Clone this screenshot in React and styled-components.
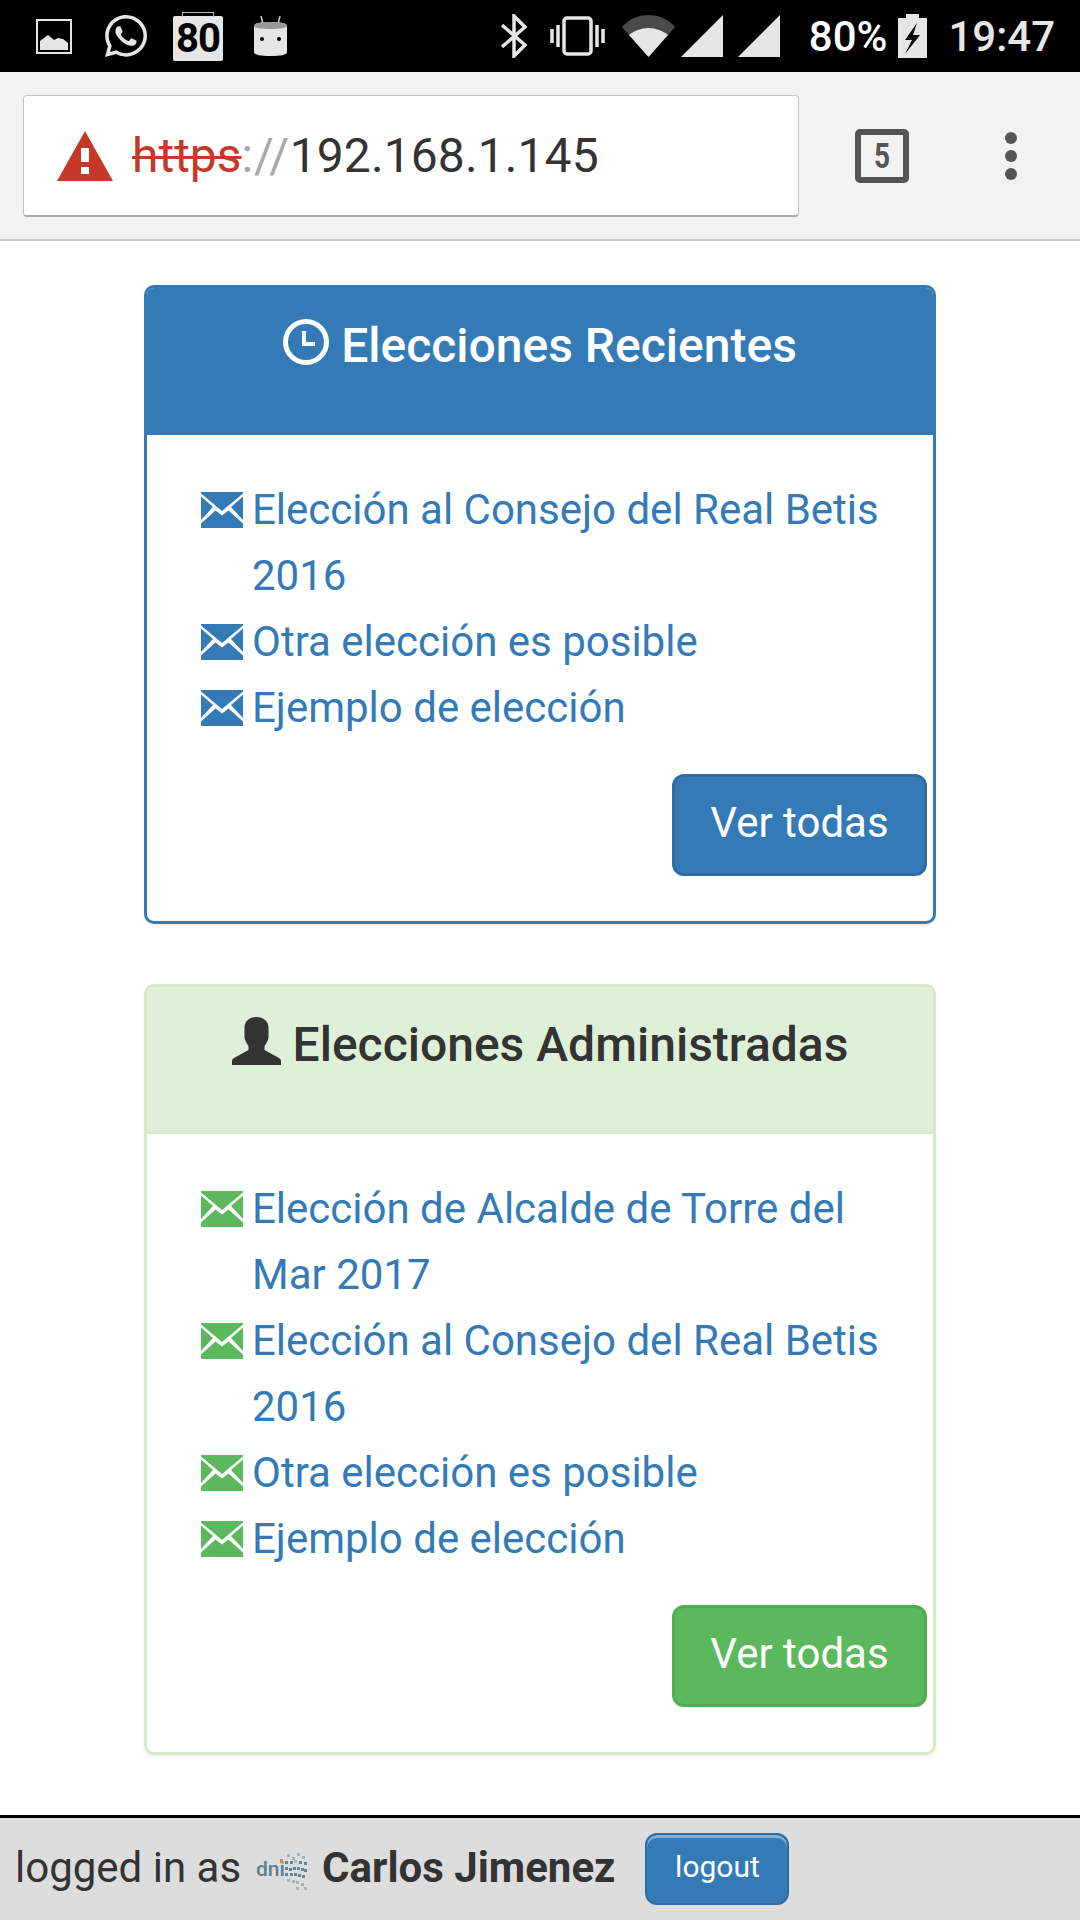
import React from 'react'
import styled, { createGlobalStyle } from 'styled-components'
import { FaWhatsapp } from 'react-icons/fa'

const GlobalStyle = createGlobalStyle`
  html, body { margin: 0; padding: 0; background: #fff; }
  * { box-sizing: border-box; }
  body { font-family: Roboto, "Liberation Sans", sans-serif; color: #333; }
`

const Screen = styled.div`
  width: 1080px;
  height: 1920px;
  display: flex;
  flex-direction: column;
  overflow: hidden;
`

const StatusBar = styled.div`
  height: 72px;
  background: #000;
  display: flex;
  align-items: center;
  padding: 0 25px 0 36px;
  color: #e6e6e6;
  flex-shrink: 0;
`
const StatusIcon = styled.svg`
  display: block;
  flex-shrink: 0;
  margin-left: ${p => p.$ml || 0}px;
`
const Spacer = styled.div`
  flex: 1;
`
const WhatsApp = styled(FaWhatsapp)`
  display: block;
  margin-left: 30px;
  color: #e6e6e6;
`
const CountBadge = styled.div`
  position: relative;
  width: 50px;
  height: 45px;
  margin: 4px 0 0 23px;
  background: #e6e6e6;
  border-radius: 2px;
  color: #000;
  font-size: 40px;
  font-weight: 700;
  line-height: 46px;
  text-align: center;
  letter-spacing: -1px;

  &::before {
    content: '';
    position: absolute;
    top: -4px;
    left: 9px;
    right: 9px;
    height: 4px;
    border: 1px solid #bbb;
    border-bottom: none;
  }
`
const BatteryLevel = styled.span`
  font-size: 42px;
  font-weight: 500;
  color: #fff;
  margin-left: 29px;
`
const Clock = styled.span`
  font-size: 42px;
  font-weight: 500;
  color: #e6e6e6;
  margin-left: 21px;
`

const Toolbar = styled.div`
  height: 169px;
  background: #f2f2f2;
  border-bottom: 2px solid #c8c8c8;
  display: flex;
  align-items: center;
  padding: 1px 0 0 23px;
  flex-shrink: 0;
`
const UrlBox = styled.div`
  width: 776px;
  height: 122px;
  background: #fff;
  border: 1px solid #c4c4c4;
  border-bottom: 2px solid #aaa;
  border-radius: 4px;
  display: flex;
  align-items: center;
  padding-left: 33px;
  font-size: 48px;
  color: #333;
`
const Scheme = styled.span`
  color: #c53929;
  text-decoration: line-through;
  text-decoration-thickness: 3px;
  margin-left: 19px;
`
const Slashes = styled.span`
  color: #a8a8a8;
  letter-spacing: 0.7px;
`
const Host = styled.span`
  letter-spacing: 0.1px;
`
const TabCount = styled.div`
  width: 54px;
  height: 54px;
  margin-left: 56px;
  border: 6px solid #555;
  border-radius: 5px;
  display: flex;
  align-items: center;
  justify-content: center;
  font-size: 35px;
  font-weight: 700;
  color: #555;
`
const TabDigit = styled.span`
  display: block;
  transform: scaleX(0.8);
`
const MenuDots = styled.div`
  margin-left: 96px;
  display: flex;
  flex-direction: column;
  gap: 6px;
`
const Dot = styled.span`
  width: 12px;
  height: 12px;
  border-radius: 50%;
  background: #555;
`

const Main = styled.div`
  flex: 1;
  padding: 44px 144px 0;
  display: flex;
  flex-direction: column;
  gap: 60px;
`
const Card = styled.section`
  border: 3px solid ${p => p.$border};
  border-radius: 10px;
  background: #fff;
  box-shadow: 0 2px 4px rgba(0, 0, 0, 0.05);
  overflow: hidden;
`
const CardHeader = styled.header`
  height: 147px;
  background: ${p => p.$bg};
  color: ${p => p.$color};
  border-bottom: ${p => p.$rule ? `3px solid ${p.$rule}` : 'none'};
  padding-top: 29px;
  display: flex;
  justify-content: center;
  align-items: flex-start;
  gap: 12px;
`
const CardTitle = styled.h2`
  margin: 0;
  font-size: 48px;
  line-height: 58px;
  font-weight: 500;
`
const HeaderIcon = styled.svg`
  display: block;
  margin-top: ${p => p.$top}px;
  flex-shrink: 0;
`
const CardBody = styled.div`
  padding: 42px 6px 45px 54px;
`
const List = styled.ul`
  list-style: none;
  margin: 0;
  padding: 0;
`
const Row = styled.li`
  display: flex;
  gap: 9px;
  font-size: 42px;
  line-height: 66px;
`
const Envelope = styled.svg`
  display: block;
  width: 42px;
  height: 36px;
  margin-top: 15px;
  flex-shrink: 0;
  color: ${p => p.$color};
`
const ElectionLink = styled.a`
  color: #337ab7;
  text-decoration: none;
  width: 660px;
`
const ButtonRow = styled.div`
  display: flex;
  justify-content: flex-end;
  margin-top: 33px;
`
const SeeAll = styled.button`
  width: 255px;
  height: 102px;
  background: ${p => p.$bg};
  border: 3px solid ${p => p.$border};
  border-radius: 12px;
  color: #fff;
  font-family: inherit;
  font-size: 42px;
  padding: 0 0 6px;
`

const Footer = styled.footer`
  height: 105px;
  background: #ddd;
  border-top: 3px solid #000;
  display: flex;
  align-items: center;
  padding-left: 15px;
  flex-shrink: 0;
`
const LoggedIn = styled.span`
  font-size: 42px;
  color: #333;
  margin-top: -4px;
`
const DniLogo = styled.svg`
  display: block;
  margin-left: 15px;
`
const UserName = styled.strong`
  font-size: 42px;
  font-weight: 700;
  color: #333;
  margin-left: 15px;
  margin-top: -4px;
`
const Logout = styled.button`
  width: 144px;
  height: 72px;
  margin-left: 30px;
  margin-top: -1px;
  background: #337ab7;
  border: 2px solid #2e6da4;
  border-radius: 12px;
  box-shadow: inset 0 3px 0 rgba(255, 255, 255, 0.4);
  color: #fff;
  font-family: inherit;
  font-size: 30px;
  padding: 0 0 4px;
`

const MailIcon = ({ color }) => (
  <Envelope $color={color} viewBox="0 0 42 36" fill="currentColor">
    <path d="M0 0h42v1.500L21 19 0 1.500z" />
    <path d="M0 4.500L12 15 0 28z" />
    <path d="M42 4.500L30 15 42 28z" />
    <path d="M0 36v-4.500L14.500 18.500l6.500 5 6.500-5L42 31.500V36z" />
  </Envelope>
)

const ClockIcon = () => (
  <HeaderIcon $top={2} width="46" height="46" viewBox="0 0 46 46" fill="none" stroke="#fff">
    <circle cx="23" cy="23" r="20.500" strokeWidth="5" />
    <path d="M21 12v13h11" strokeWidth="4" />
  </HeaderIcon>
)

const UserIcon = () => (
  <HeaderIcon $top={1} width="49" height="48" viewBox="0 0 49 48" fill="#333">
    <path d="M24.500 0c-7 0-12 4-12 11v9c0 3 2 6 4 9v4L2 41c-1.500 1-2 2-2 3v4h49v-4c0-1-.5-2-2-3l-14.500-8v-4c2-3 4-6 4-9v-9c0-7-5-11-12-11z" />
  </HeaderIcon>
)

const DOTS = [
  [31, 6], [36, 9], [41, 5], [46, 8], [29, 13], [34, 13], [38, 12], [43, 13], [48, 14],
  [29, 19], [33, 20], [37, 19], [41, 19], [45, 20], [48, 21], [29, 25], [34, 25], [38, 25],
  [42, 26], [46, 27], [31, 31], [36, 32], [40, 33], [45, 35], [48, 39], [40, 39],
]

const StatusRow = () => (
  <StatusBar>
    <StatusIcon width="36" height="35" viewBox="0 0 36 35">
      <path d="M1 1h34v33H1z" fill="none" stroke="#e6e6e6" strokeWidth="2" />
      <path d="M4 31v-9l8-6 6 5 4-2 5 1 5 4v7z" fill="#e6e6e6" />
    </StatusIcon>
    <WhatsApp size={48} />
    <CountBadge>80</CountBadge>
    <StatusIcon $ml={31} width="33" height="40" viewBox="0 0 33 40">
      <path d="M7 0l2 8M26 0l-2 8" stroke="#ccc" strokeWidth="1.500" />
      <path d="M0 10c0-3 7-4 16.500-4S33 7 33 10v26c0 3-7 4-16.500 4S0 39 0 36z" fill="#e6e6e6" />
      <path d="M0 10c0-3 7-4 16.500-4S33 7 33 10c0 2-7 3-16.500 3S0 12 0 10z" fill="#999" />
      <circle cx="8" cy="23" r="2" fill="#000" />
      <circle cx="25" cy="23" r="2" fill="#000" />
    </StatusIcon>
    <Spacer />
    <StatusIcon width="26" height="44" viewBox="0 0 26 44">
      <path d="M1 11l23 20-11 11V2l11 11L1 33" fill="none" stroke="#e6e6e6" strokeWidth="3.500" />
    </StatusIcon>
    <StatusIcon $ml={23} width="55" height="40" viewBox="0 0 55 40" fill="none" stroke="#e6e6e6">
      <rect x="14" y="2" width="27" height="36" rx="3" strokeWidth="3.500" />
      <path d="M8 9v22M2 13v14M47 9v22M53 13v14" strokeWidth="3.500" />
    </StatusIcon>
    <StatusIcon $ml={17} width="53" height="42" viewBox="0 0 53 42">
      <path d="M0 12C7 4 16 0 26.500 0S46 4 53 12L26.500 42z" fill="#4a4a4a" />
      <path d="M7 20c5-4 12-7 19.500-7S41 16 46 20L26.500 42z" fill="#e6e6e6" />
    </StatusIcon>
    <StatusIcon $ml={6} width="42" height="42" viewBox="0 0 42 42">
      <path d="M42 0v42H0z" fill="#e6e6e6" />
    </StatusIcon>
    <StatusIcon $ml={15} width="42" height="42" viewBox="0 0 42 42">
      <path d="M42 0v42H0z" fill="#e6e6e6" />
    </StatusIcon>
    <BatteryLevel>80%</BatteryLevel>
    <StatusIcon $ml={11} width="29" height="44" viewBox="0 0 29 44">
      <path d="M8 0h13v4h8v40H0V4h8z" fill="#e6e6e6" />
      <path d="M19 9L7 26h7L7 40l15-19h-7z" fill="#000" />
    </StatusIcon>
    <Clock>19:47</Clock>
  </StatusBar>
)

const App = () => {
  return (
    <Screen>
      <GlobalStyle />
      <StatusRow />
      <Toolbar>
        <UrlBox>
          <svg width="56" height="50" viewBox="0 0 56 50">
            <path d="M28 0l28 50H0z" fill="#c53929" />
            <path d="M24 17h8v14h-8zM24 36h8v7h-8z" fill="#fff" />
          </svg>
          <Scheme>https</Scheme>
          <Slashes>://</Slashes>
          <Host>192.168.1.145</Host>
        </UrlBox>
        <TabCount><TabDigit>5</TabDigit></TabCount>
        <MenuDots>
          <Dot />
          <Dot />
          <Dot />
        </MenuDots>
      </Toolbar>
      <Main>
        <Card $border="#337ab7">
          <CardHeader $bg="#337ab7" $color="#fff">
            <ClockIcon />
            <CardTitle>Elecciones Recientes</CardTitle>
          </CardHeader>
          <CardBody>
            <List>
              {['Elección al Consejo del Real Betis 2016', 'Otra elección es posible', 'Ejemplo de elección'].map(name => (
                <Row key={name}>
                  <MailIcon color="#337ab7" />
                  <ElectionLink>{name}</ElectionLink>
                </Row>
              ))}
            </List>
            <ButtonRow>
              <SeeAll $bg="#337ab7" $border="#2e6da4">Ver todas</SeeAll>
            </ButtonRow>
          </CardBody>
        </Card>
        <Card $border="#d6e9c6">
          <CardHeader $bg="#dff0d8" $color="#333" $rule="#d6e9c6">
            <UserIcon />
            <CardTitle>Elecciones Administradas</CardTitle>
          </CardHeader>
          <CardBody>
            <List>
              {['Elección de Alcalde de Torre del Mar 2017', 'Elección al Consejo del Real Betis 2016', 'Otra elección es posible', 'Ejemplo de elección'].map(name => (
                <Row key={name}>
                  <MailIcon color="#5cb85c" />
                  <ElectionLink>{name}</ElectionLink>
                </Row>
              ))}
            </List>
            <ButtonRow>
              <SeeAll $bg="#5cb85c" $border="#4cae4c">Ver todas</SeeAll>
            </ButtonRow>
          </CardBody>
        </Card>
      </Main>
      <Footer>
        <LoggedIn>logged in as</LoggedIn>
        <DniLogo width="51" height="42" viewBox="0 0 51 42">
          <text x="0" y="28" fontFamily="Roboto, sans-serif" fontSize="21" fontWeight="500" fill="#5b7f93">dni</text>
          <rect x="24" y="11" width="3" height="4" fill="#f08030" />
          {DOTS.map(([x, y]) => (
            <rect key={`${x}-${y}`} x={x} y={y} width="3" height="3" fill={y > 12 && y < 28 ? '#5f8599' : '#9db4c2'} />
          ))}
        </DniLogo>
        <UserName>Carlos Jimenez</UserName>
        <Logout>logout</Logout>
      </Footer>
    </Screen>
  )
}

export default App
